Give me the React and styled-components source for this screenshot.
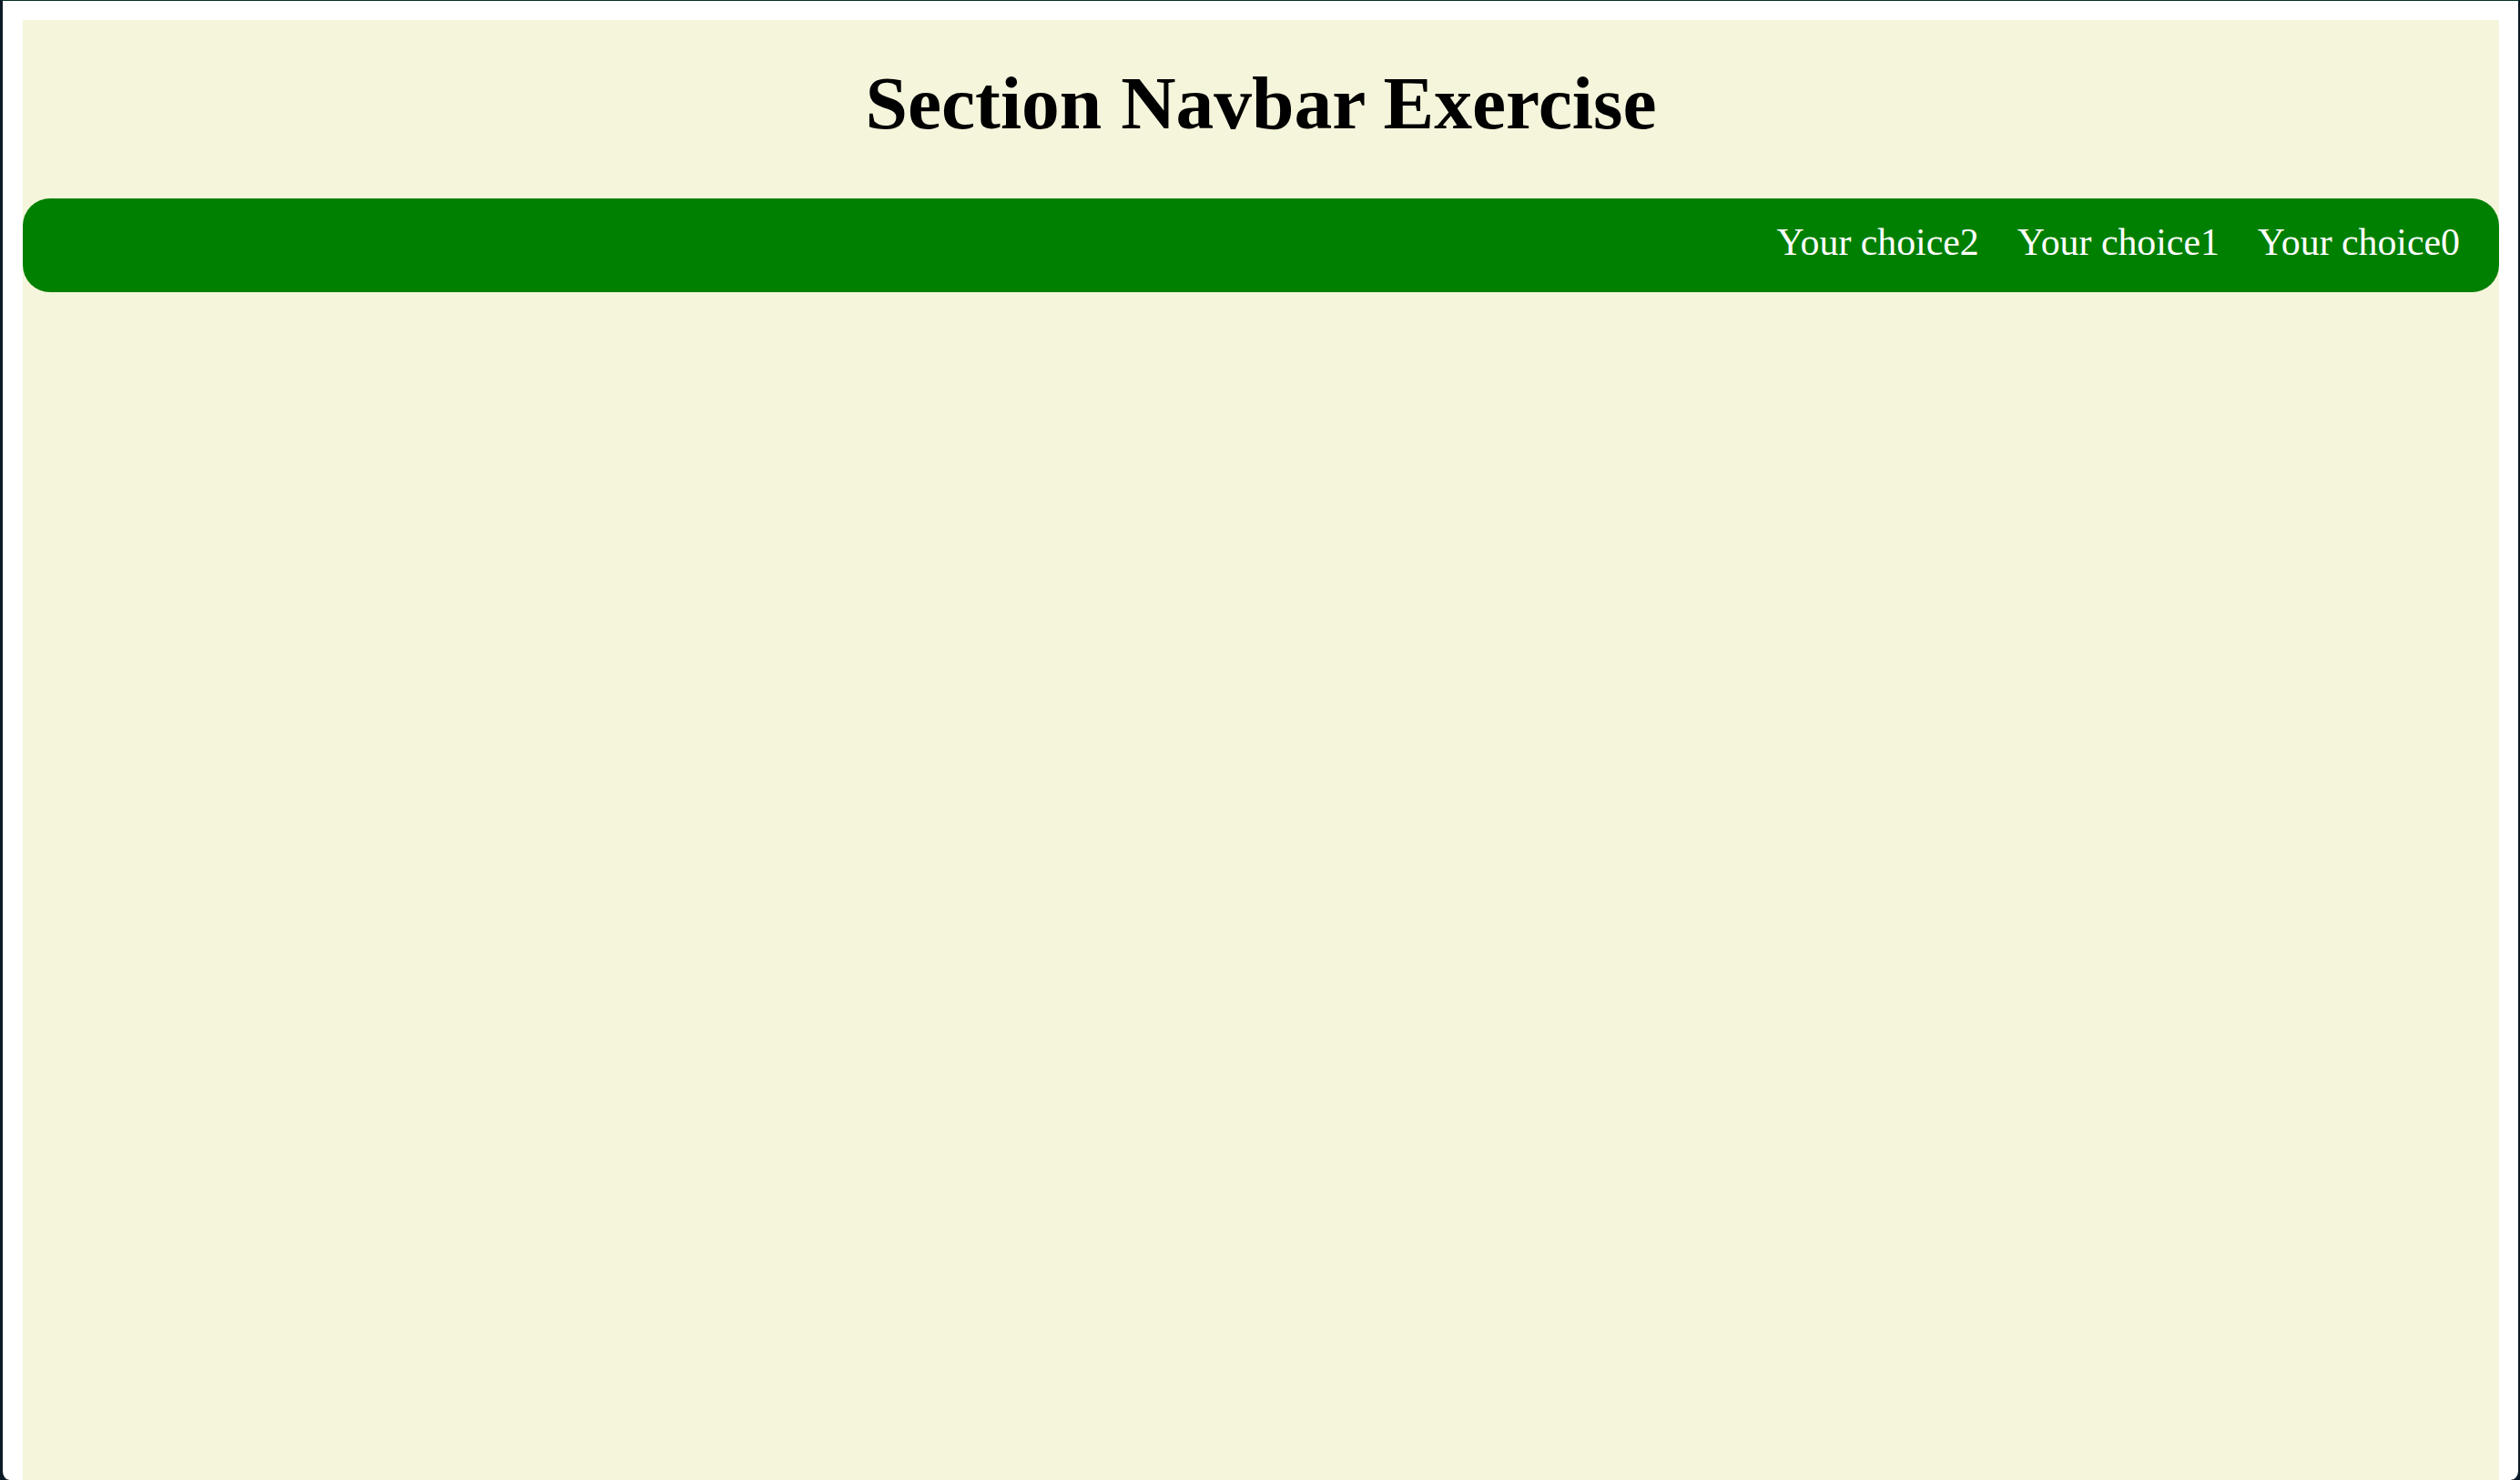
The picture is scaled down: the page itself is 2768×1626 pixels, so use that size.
import React from 'react'
import styled, { createGlobalStyle } from 'styled-components'

const GlobalStyle = createGlobalStyle`
  html, body {
    margin: 0;
    padding: 0;
    background: #0b1a26;
  }
  body {
    font-family: "Liberation Serif", "Times New Roman", serif;
  }
`

const Window = styled.div`
  box-sizing: border-box;
  min-height: 100vh;
  background: #ffffff;
  border-top: 1px solid #033322;
  border-left: 3px solid #0b1a26;
  border-right: 2px solid #0b1a26;
  border-bottom-left-radius: 10px;
  border-bottom-right-radius: 10px;
  padding: 21px 21px 0 22px;
  display: flex;
  flex-direction: column;
`

const Page = styled.main`
  flex: 1;
  background: beige;
  padding-top: 49px;
  display: flex;
  flex-direction: column;
`

const Title = styled.h1`
  margin: 0 0 63px;
  font-size: 83.5px;
  line-height: 84px;
  font-weight: bold;
  text-align: center;
  color: #000;
`

const Nav = styled.nav`
  box-sizing: border-box;
  height: 103px;
  background: green;
  border-radius: 30px;
  padding: 28px 43px 35px;
`

const List = styled.ul`
  display: flex;
  flex-direction: row-reverse;
  gap: 42px;
  margin: 0;
  padding: 0;
  list-style: none;
`

const Item = styled.li`
  font-size: 41.8px;
  line-height: 40px;
  color: #fff;
`

const choices = ['Your choice0', 'Your choice1', 'Your choice2']

const App = () => (
  <>
    <GlobalStyle />
    <Window>
      <Page>
        <Title>Section Navbar Exercise</Title>
        <Nav>
          <List>
            {choices.map(c => (
              <Item key={c}>{c}</Item>
            ))}
          </List>
        </Nav>
      </Page>
    </Window>
  </>
)

export default App
